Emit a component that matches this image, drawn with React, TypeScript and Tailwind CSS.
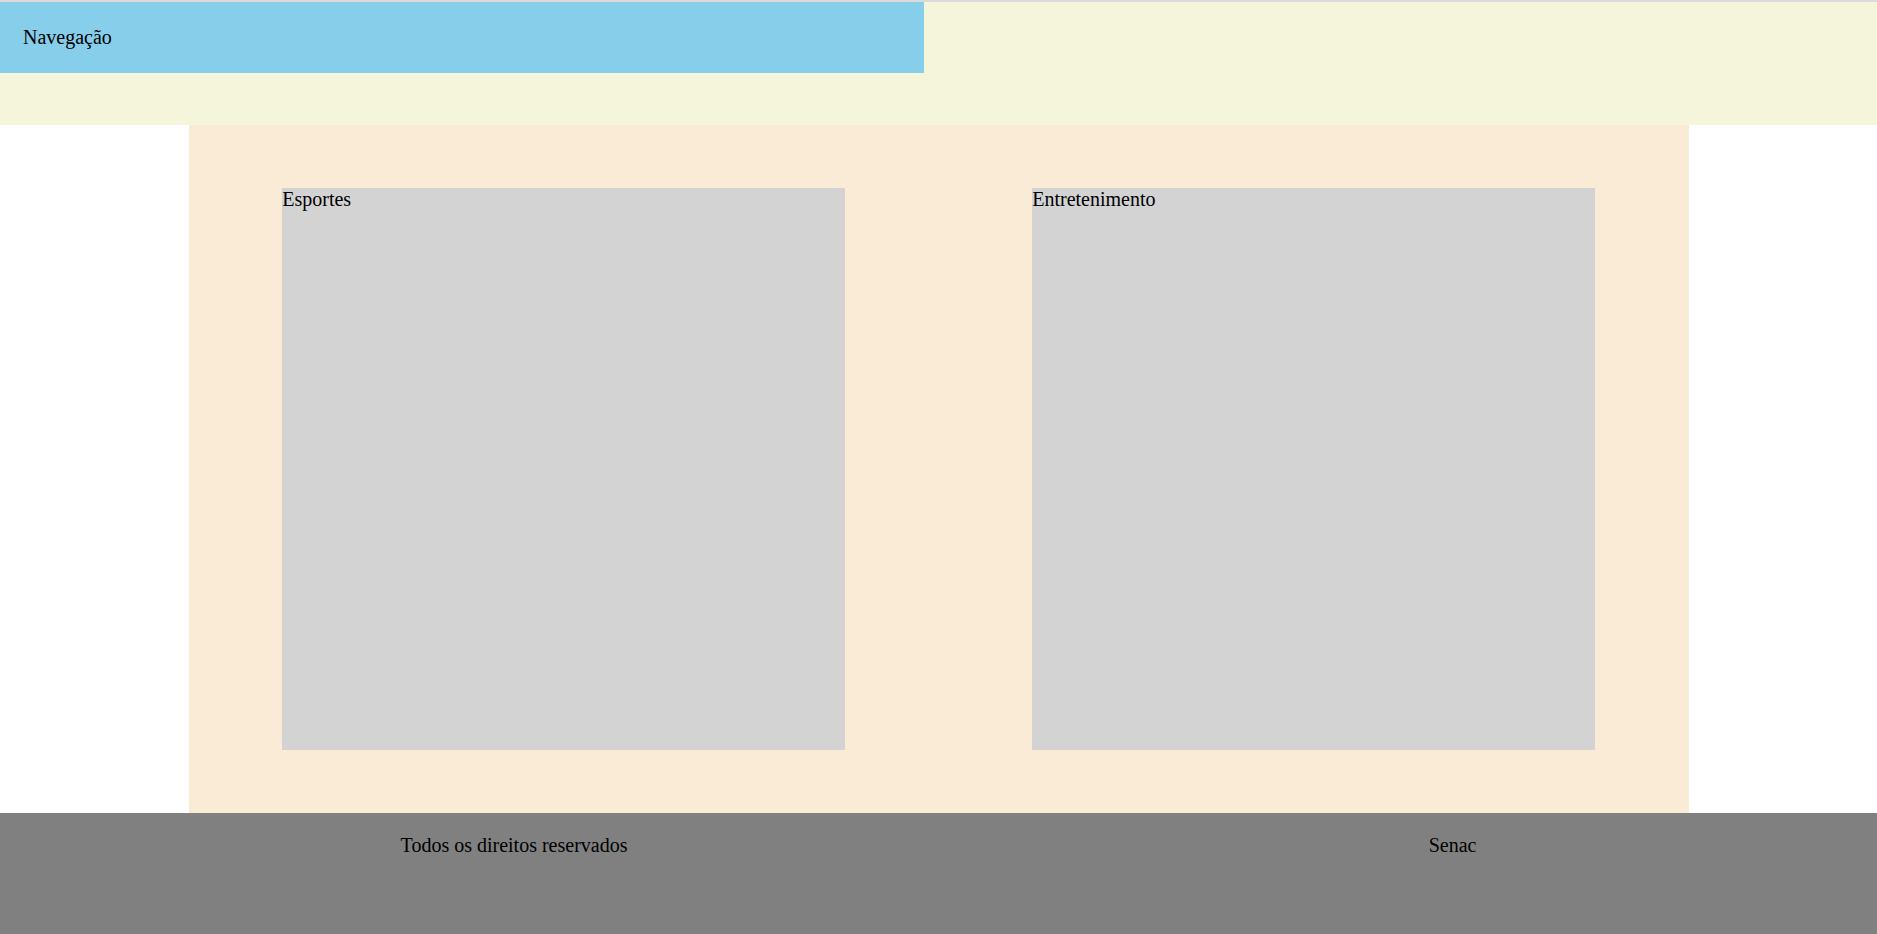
export default function App() {
  return (
    <div className="w-full bg-white text-black text-[20px] font-['Liberation_Serif','Times_New_Roman',serif]">
      <div className="h-[2px] bg-[#dadada]" />
      <header className="h-[123px] bg-[#f5f5dc]">
        <nav className="flex h-[71px] w-[924px] items-center bg-[#87ceeb] pb-[2px] pl-[23px]">
          <span>Navegação</span>
        </nav>
      </header>
      <main className="mx-auto flex h-[688px] w-[1500px] items-center justify-around bg-[#faebd7]">
        <section className="h-[562.5px] w-[562.5px] bg-[#d3d3d3] leading-[22px]">Esportes</section>
        <section className="h-[562.5px] w-[562.5px] bg-[#d3d3d3] leading-[22px]">Entretenimento</section>
      </main>
      <footer className="flex h-[125px] items-start justify-around bg-[#808080] pt-[21px] leading-[22px]">
        <span>Todos os direitos reservados</span>
        <span>Senac</span>
      </footer>
    </div>
  );
}
